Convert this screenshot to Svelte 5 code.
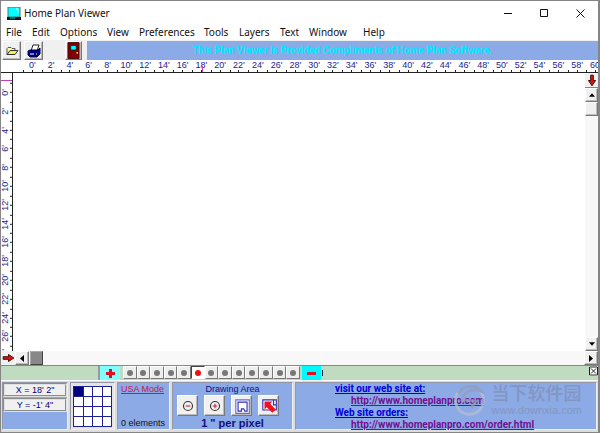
<script lang="ts">
  const menus = [
    { label: "File", width: 26 },
    { label: "Edit", width: 28 },
    { label: "Options", width: 47 },
    { label: "View", width: 32 },
    { label: "Preferences", width: 65 },
    { label: "Tools", width: 35 },
    { label: "Layers", width: 41 },
    { label: "Text", width: 29 },
    { label: "Window", width: 54 },
    { label: "Help", width: 30 },
  ];

  const across = Array.from({ length: 31 }, (_, i) => `${i * 2}'`);
  const down = Array.from({ length: 15 }, (_, i) => `${i * 2}'`);
  const layers = Array.from({ length: 13 }, (_, i) => i + 1);
  const cells = Array.from({ length: 16 }, (_, i) => i);

  let activeLayer = $state(6);
  let activeCell = $state(0);
</script>

<div class="window">
  <header class="titlebar">
    <svg class="logo" viewBox="0 0 14 13" aria-hidden="true">
      <rect x="1" y="0" width="12" height="10" fill="#0ff" stroke="#3a7c80" />
      <path d="M9 2h2v4" stroke="#fff" fill="none" />
      <path d="M0 10h14v3H0z" fill="#111" />
      <path d="M3 11h5" stroke="#0cc" />
    </svg>
    <h1>Home Plan Viewer</h1>
    <div class="window-buttons">
      <button type="button" aria-label="Minimize">
        <svg viewBox="0 0 9 9"><path d="M0 4.5h8" /></svg>
      </button>
      <button type="button" aria-label="Maximize">
        <svg viewBox="0 0 9 9"><path d="M.5.5h7v7h-7z" /></svg>
      </button>
      <button type="button" aria-label="Close">
        <svg viewBox="0 0 9 9"><path d="M.5.5l8 8M8.5.5l-8 8" /></svg>
      </button>
    </div>
  </header>

  <nav class="menubar">
    {#each menus as menu}
      <button type="button" style={`width: ${menu.width}px`}>{menu.label}</button>
    {/each}
  </nav>

  <div class="toolbar">
    <button type="button" class="raised tool" aria-label="Open">
      <svg viewBox="0 0 14 12">
        <path d="M2 9.5V3.5l1-1h3l1 1h3v2" fill="#ffffa0" stroke="#555" />
        <path d="M2 9.5l3-4h8l-3 4z" fill="#f5f04a" stroke="#333" />
      </svg>
    </button>
    <button type="button" class="raised tool" aria-label="Print">
      <svg viewBox="0 0 14 14">
        <path d="M4 7l2-6h6l-2 6z" fill="#fff" stroke="#222" />
        <path d="M1 7l2-1h8l2-2v6l-3 3H3l-2-2z" fill="#000087" stroke="#000050" />
        <path d="M3 10h4" stroke="#fff" />
        <path d="M9 10h1" stroke="#ff0" />
      </svg>
    </button>
    <button type="button" class="raised tool exit" aria-label="Exit">
      <svg viewBox="0 0 14 17">
        <path d="M1 0h12v17H1z" fill="#800000" stroke="#400" />
        <path d="M4 3h6v5H4z" fill="#0ff" stroke="#222" />
        <circle cx="11" cy="11" r="1" fill="#ff0" />
      </svg>
    </button>
    <div class="banner">This Plan Viewer is Provided Compliments of Home Plan Software.</div>
  </div>

  <div class="ruler-top">
    <div class="scale">
      {#each across as mark}
        <span>{mark}</span>
      {/each}
    </div>
    <i class="cursor-x"></i>
  </div>

  <div class="workspace">
    <div class="ruler-left">
      <div class="scale">
        {#each down as mark}
          <span>{mark}</span>
        {/each}
      </div>
      <i class="cursor-y"></i>
    </div>
    <main class="canvas"></main>
    <div class="scroll-v">
      <button type="button" class="jump" aria-label="Jump down">
        <svg viewBox="0 0 9 13"><path d="M3 .5h3v6h2.5L4.500 12.500.500 6.500H3z" fill="#e01010" stroke="#300" /></svg>
      </button>
      <button type="button" class="raised" aria-label="Scroll up">
        <svg viewBox="0 0 7 4"><path d="M0 4h7L3.500 0z" /></svg>
      </button>
      <div class="raised thumb"></div>
      <button type="button" class="raised last" aria-label="Scroll down">
        <svg viewBox="0 0 7 4"><path d="M0 0h7L3.500 4z" /></svg>
      </button>
    </div>
  </div>

  <div class="scroll-h">
    <button type="button" class="jump" aria-label="Jump right">
      <svg viewBox="0 0 13 9"><path d="M.5 3v3h6v2.500l6-4-6-4V3z" fill="#e01010" stroke="#300" /></svg>
    </button>
    <button type="button" class="raised" aria-label="Scroll left">
      <svg viewBox="0 0 4 7"><path d="M4 0v7L0 3.500z" /></svg>
    </button>
    <div class="thumb"></div>
    <button type="button" class="raised last" aria-label="Scroll right">
      <svg viewBox="0 0 4 7"><path d="M0 0v7l4-3.500z" /></svg>
    </button>
  </div>

  <div class="layerbar">
    <button type="button" class="add" aria-label="Add layer">
      <svg viewBox="0 0 9 9"><path d="M4.500 0v9M0 4.500h9" /></svg>
    </button>
    <div class="layers">
      {#each layers as layer}
        <button
          type="button"
          class:active={layer === activeLayer}
          aria-label={`Layer ${layer}`}
          onclick={() => (activeLayer = layer)}
        ><i></i></button>
      {/each}
    </div>
    <button type="button" class="remove" aria-label="Remove layer">
      <svg viewBox="0 0 9 9"><path d="M0 4.500h9" /></svg>
    </button>
    <i class="caret"></i>
    <button type="button" class="dismiss" aria-label="Close layers">
      <svg viewBox="0 0 9 9"><path d="M.5.5h8v8h-8zM2 2l5 5M7 2l-5 5" /></svg>
    </button>
  </div>

  <footer class="status">
    <section class="coords">
      <output>X = 18' 2"</output>
      <output>Y = -1' 4"</output>
    </section>
    <section class="overview">
      <div class="cells">
        {#each cells as cell}
          <button
            type="button"
            class:active={cell === activeCell}
            aria-label={`Area ${cell + 1}`}
            onclick={() => (activeCell = cell)}
          ></button>
        {/each}
      </div>
    </section>
    <section class="mode">
      <a href="#mode">USA Mode</a>
      <span>0 elements</span>
    </section>
    <section class="area">
      <h2>Drawing Area</h2>
      <div class="zooms">
        <button type="button" class="raised" aria-label="Zoom out">
          <svg viewBox="0 0 16 16">
            <circle cx="8" cy="8" r="4" fill="none" stroke="#333" />
            <path d="M6 8h4" stroke="#d02030" />
          </svg>
        </button>
        <button type="button" class="raised" aria-label="Zoom in">
          <svg viewBox="0 0 16 16">
            <circle cx="8" cy="8" r="4" fill="none" stroke="#333" />
            <path d="M6 8h4M8 6v4" stroke="#d02030" />
          </svg>
        </button>
        <button type="button" class="raised" aria-label="Fit plan">
          <svg viewBox="0 0 16 16">
            <path d="M2.500 2.500h12v12h-12z" fill="#fff" stroke="#6868d8" />
            <path d="M4.500 4.500h8v8h-2l-1-2h-2v2h-3z" fill="none" stroke="#3030b0" />
          </svg>
        </button>
        <button type="button" class="raised" aria-label="Previous view">
          <svg viewBox="0 0 16 16">
            <path d="M2.500 2.500h12v9h-12zM12 3v4h2" fill="#fff" stroke="#3030b0" />
            <path d="M4 4h7l-2 2 5 5-3 3-5-5-2 2z" fill="#f01020" />
          </svg>
        </button>
      </div>
      <strong>1 " per pixel</strong>
    </section>
    <section class="links">
      <span>visit our web site at:</span>
      <a href="http://www.homeplanpro.com">http://www.homeplanpro.com</a>
      <span>Web site orders:</span>
      <a href="http://www.homeplanpro.com/order.html">http://www.homeplanpro.com/order.html</a>
      <div class="watermark">
        <svg viewBox="0 0 34 36" aria-hidden="true">
          <path d="M7 7a14 14 0 1 0 20 1" fill="none" stroke="#b7bfd5" stroke-width="3" />
          <path d="M5 10C12 2 22 1 28 8c-9-3-16 0-19 9l14 1-5 7" fill="none" stroke="#949cb6" stroke-width="3" />
        </svg>
        <div>
          <b>当下软件园</b>
          <small>www.downxia.com</small>
        </div>
      </div>
    </section>
  </footer>
</div>

<style>
  :global(body) {
    margin: 0;
  }

  .window,
  .window * {
    box-sizing: border-box;
  }

  .window {
    display: flex;
    flex-direction: column;
    min-height: 100vh;
    border: 1px solid #858585;
    border-right-width: 2px;
    background: #fff;
    color: #111;
    font-family: "Liberation Sans", Arial, sans-serif;
    font-size: 9px;
    overflow: hidden;
  }

  button {
    margin: 0;
    padding: 0;
    border: 0;
    background: none;
    color: inherit;
    font: inherit;
  }

  svg {
    display: block;
  }

  .raised {
    display: flex;
    align-items: center;
    justify-content: center;
    background: #f0f0f0;
    border: 1px solid #fff;
    border-right-color: #777;
    border-bottom-color: #777;
    box-shadow: inset -1px -1px #bbb;
  }

  .titlebar {
    display: flex;
    align-items: center;
    height: 24px;
    padding-left: 6px;
  }

  .logo {
    width: 14px;
    height: 13px;
  }

  h1 {
    margin: 0 0 0 3px;
    font: 10px/16px "Noto Sans", sans-serif;
  }

  .window-buttons {
    display: flex;
    margin-left: auto;
  }

  .window-buttons button {
    display: flex;
    align-items: center;
    justify-content: center;
    width: 36px;
    height: 22px;
  }

  .window-buttons svg {
    width: 9px;
    height: 9px;
    fill: none;
    stroke: #111;
  }

  .menubar {
    display: flex;
    height: 15px;
    padding-left: 5px;
    font: 10px/15px "Noto Sans", sans-serif;
  }

  .menubar button {
    text-align: left;
  }

  .toolbar {
    display: flex;
    gap: 3px;
    height: 20px;
    padding: 1px 0 0 1px;
    background: #f0f0f0;
  }

  .tool {
    width: 19px;
    height: 19px;
  }

  .tool svg {
    width: 14px;
    height: 14px;
  }

  .exit {
    width: 17px;
    margin-left: 19px;
  }

  .exit svg {
    width: 13px;
    height: 17px;
  }

  .banner {
    flex: 1;
    margin-left: 2px;
    background: #8caae6;
    border: 1px solid #a0a8b8;
    color: #00e8ff;
    font: bold 10px/18px Roboto, sans-serif;
    text-align: center;
  }

  .ruler-top {
    position: relative;
    height: 13px;
    border-bottom: 1px solid #222;
    overflow: hidden;
  }

  .ruler-top .scale {
    display: flex;
    height: 12px;
    margin: 0 -7px 0 22px;
  }

  .scale span {
    flex: 1 1 0;
    min-width: 0;
    min-height: 0;
    color: #1c1c90;
    text-align: center;
    white-space: nowrap;
  }

  .ruler-top span {
    line-height: 10px;
    background:
      linear-gradient(#222, #222) center bottom / 1px 2px no-repeat,
      linear-gradient(#222, #222) left bottom / 1px 2px no-repeat;
  }

  .cursor-x {
    position: absolute;
    left: 201px;
    bottom: 0;
    width: 1px;
    height: 6px;
    background: #c040c0;
  }

  .workspace {
    display: flex;
    flex: 1;
    min-height: 120px;
  }

  .ruler-left {
    position: relative;
    width: 12px;
    border-right: 1px solid #222;
    overflow: hidden;
  }

  .ruler-left .scale {
    position: absolute;
    inset: 10px 0 -14px;
    display: flex;
    flex-direction: column;
  }

  .ruler-left span {
    writing-mode: vertical-rl;
    transform: rotate(180deg);
    line-height: 9px;
    background:
      linear-gradient(#222, #222) left center / 2px 1px no-repeat,
      linear-gradient(#222, #222) left bottom / 2px 1px no-repeat;
  }

  .cursor-y {
    position: absolute;
    top: 7px;
    right: 0;
    width: 11px;
    height: 1px;
    background: #c040c0;
  }

  .canvas {
    flex: 1;
  }

  .scroll-v {
    display: flex;
    flex-direction: column;
    width: 13px;
    background: #f8f8f8;
  }

  .scroll-v .raised {
    height: 14px;
  }

  .scroll-v svg {
    width: 6px;
    height: 4px;
  }

  .jump {
    display: flex;
    align-items: center;
    justify-content: center;
    background: #f0f0f0;
  }

  .scroll-v .jump {
    height: 15px;
    border-bottom: 1px solid #888;
  }

  .scroll-v .jump svg {
    width: 8px;
    height: 13px;
  }

  .scroll-v .last {
    margin-top: auto;
  }

  .scroll-h {
    display: flex;
    height: 14px;
    background: #f8f8f8;
  }

  .scroll-h button {
    width: 14px;
  }

  .scroll-h svg {
    width: 4px;
    height: 7px;
  }

  .scroll-h .jump svg {
    width: 13px;
    height: 8px;
  }

  .scroll-h .thumb {
    width: 13px;
    margin-left: 1px;
    background: #888;
    border: 1px solid #aaa;
    border-right-color: #444;
    border-bottom-color: #444;
  }

  .scroll-h .last {
    margin-left: auto;
  }

  .layerbar {
    display: flex;
    height: 16px;
    padding-left: 97px;
    background: #c0dcc0;
    border-top: 1px solid #888;
    border-bottom: 1px solid #fff;
  }

  .add,
  .remove {
    display: flex;
    align-items: center;
    justify-content: center;
    width: 22px;
    background: #80ffff;
    border-left: 2px solid #999;
  }

  .remove {
    width: 19px;
    margin-left: 2px;
    background: #00f8ff;
    border-left: 0;
  }

  .add svg,
  .remove svg {
    width: 9px;
    height: 9px;
    stroke: #e01020;
    stroke-width: 3;
  }

  .layers {
    display: flex;
    width: 177px;
    margin-left: 3px;
  }

  .layers button {
    display: flex;
    flex: 1;
    align-items: center;
    justify-content: center;
    height: 13px;
    background: #eee;
    border: 1px solid #fff;
    border-right-color: #777;
    border-bottom-color: #777;
  }

  .layers i {
    width: 6px;
    height: 6px;
    border-radius: 50%;
    background: #777;
  }

  .layers .active {
    background: #fff;
    border-color: #444 #fff #fff #444;
  }

  .layers .active i {
    background: #f01010;
  }

  .caret {
    width: 1px;
    height: 6px;
    margin: 4px 0 0 1px;
    background: #224;
  }

  .dismiss {
    align-self: flex-start;
    margin-left: auto;
    background: #fff;
  }

  .dismiss svg {
    width: 9px;
    height: 10px;
    fill: none;
    stroke: #222;
  }

  .status {
    display: flex;
    gap: 2px;
    height: 51px;
    padding: 1px 1px 2px;
    background: #ddd;
  }

  .status section {
    background: #8caae6;
    border: 1px solid #9298a8;
    border-right-color: #eee;
    border-bottom-color: #eee;
  }

  .coords {
    display: flex;
    flex-direction: column;
    gap: 1px;
    width: 66px;
  }

  .coords output {
    height: 14px;
    background: #f0f0f0;
    border: 2px groove #e0e0e0;
    color: #000080;
    line-height: 10px;
    text-align: center;
  }

  .status .overview {
    width: 45px;
    padding: 3px 2px;
    background: #e4e4e4;
  }

  .cells {
    display: grid;
    grid-template-columns: repeat(4, 1fr);
    grid-template-rows: repeat(4, 1fr);
    height: 41px;
    border: 1px solid #202090;
    border-width: 1px 0 0 1px;
  }

  .cells button {
    background: #fff;
    border: 1px solid #202090;
    border-width: 0 1px 1px 0;
  }

  .cells .active {
    background: #000080;
  }

  .mode {
    display: flex;
    flex-direction: column;
    justify-content: space-between;
    width: 53px;
    padding-left: 3px;
    line-height: 12px;
    white-space: nowrap;
  }

  .mode a {
    color: #c41844;
  }

  .area {
    display: flex;
    flex-direction: column;
    align-items: center;
    width: 121px;
    color: #101080;
  }

  h2 {
    margin: 0;
    font-size: 9px;
    font-weight: normal;
    line-height: 12px;
  }

  .zooms {
    display: flex;
    align-self: flex-start;
    gap: 6px;
    margin-left: 4px;
  }

  .zooms button {
    width: 21px;
    height: 21px;
  }

  .zooms svg {
    width: 18px;
    height: 18px;
  }

  .area strong {
    font-size: 11px;
    line-height: 15px;
  }

  .links {
    position: relative;
    display: flex;
    flex: 1;
    flex-direction: column;
    align-items: flex-start;
    padding-left: 39px;
    color: #0000d8;
    font: bold 10px/12px Roboto, sans-serif;
    white-space: nowrap;
  }

  .links span {
    text-decoration: underline;
  }

  .links a {
    margin-left: 16px;
    color: #701090;
  }

  .watermark {
    position: absolute;
    top: 0;
    right: 14px;
    display: flex;
    gap: 5px;
    color: #808eb4;
    opacity: 0.7;
    pointer-events: none;
  }

  .watermark svg {
    width: 34px;
    height: 36px;
  }

  .watermark div {
    display: flex;
    flex-direction: column;
    gap: 3px;
  }

  .watermark b {
    font: 500 18px/18px "Noto Sans CJK SC", sans-serif;
  }

  .watermark small {
    font: 11px/12px "Liberation Sans", sans-serif;
  }
</style>
